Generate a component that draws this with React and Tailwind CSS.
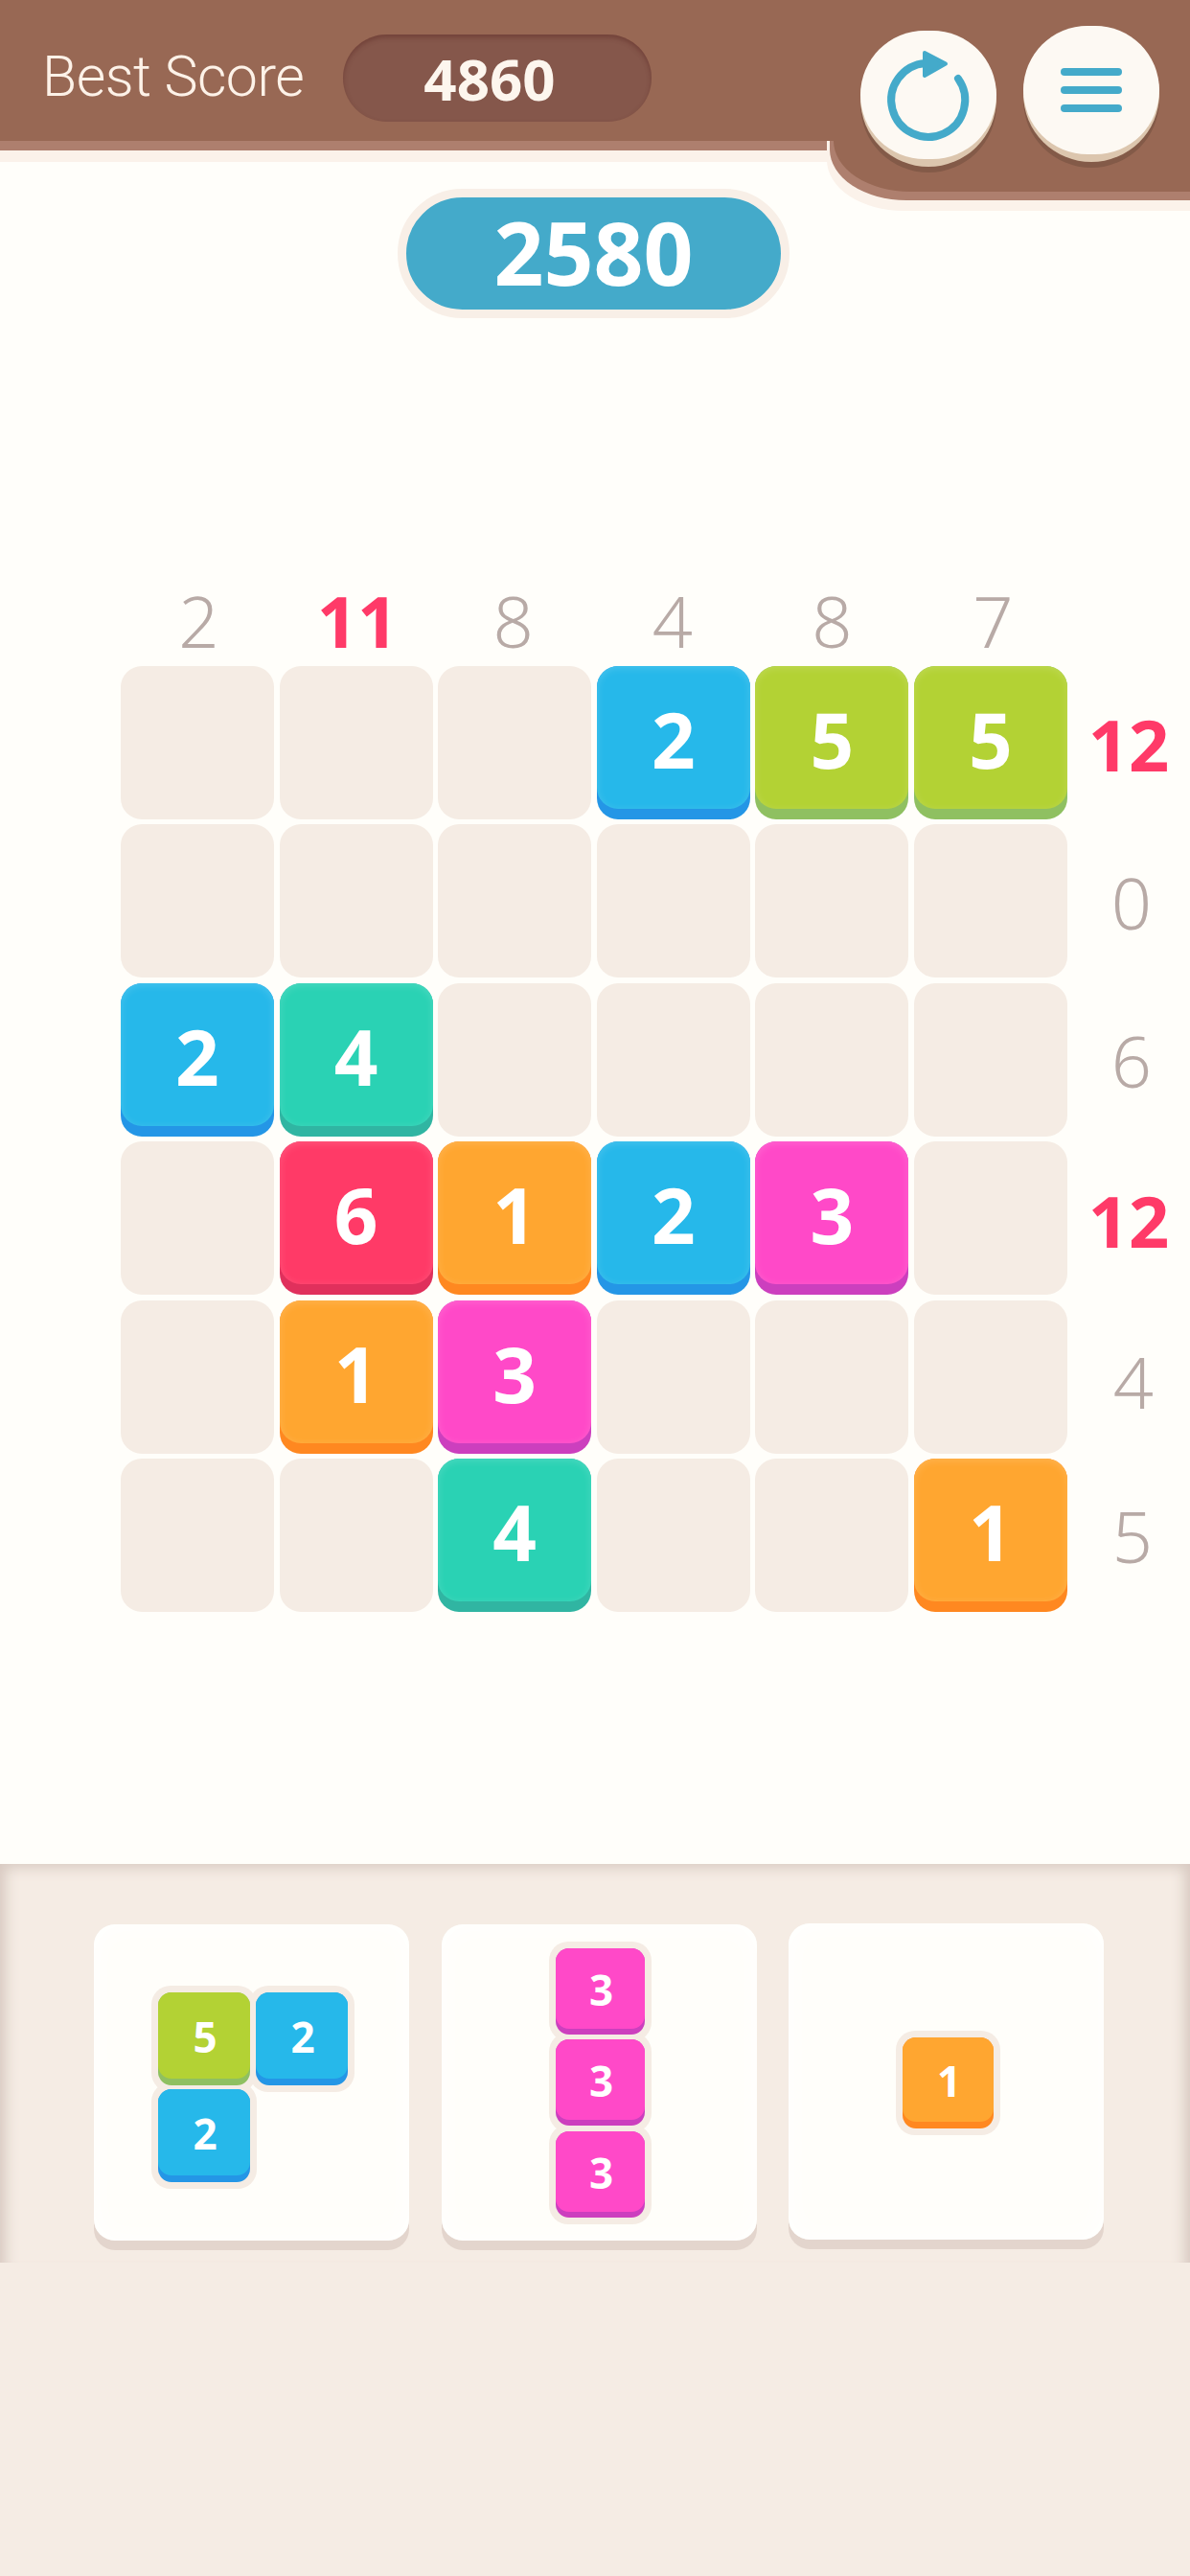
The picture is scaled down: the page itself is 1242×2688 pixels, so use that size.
const FONT = "font-['Noto_Sans','Open_Sans',sans-serif]";

const COLORS = {
  blue: { lip: "bg-[#2496e6]", face: "bg-[#26b8ea]" },
  green: { lip: "bg-[#8fc061]", face: "bg-[#b3d234]" },
  teal: { lip: "bg-[#30b5a2]", face: "bg-[#2ad2b4]" },
  red: { lip: "bg-[#e0305c]", face: "bg-[#ff3a67]" },
  orange: { lip: "bg-[#ff8820]", face: "bg-[#ffa630]" },
  pink: { lip: "bg-[#cc3fbe]", face: "bg-[#ff49c8]" },
};

const BOARD = [
  [null, null, null, [2, "blue"], [5, "green"], [5, "green"]],
  [null, null, null, null, null, null],
  [[2, "blue"], [4, "teal"], null, null, null, null],
  [null, [6, "red"], [1, "orange"], [2, "blue"], [3, "pink"], null],
  [null, [1, "orange"], [3, "pink"], null, null, null],
  [null, null, [4, "teal"], null, null, [1, "orange"]],
];
const TOP = [
  [2, false, "pl-[3px]"],
  [11, true, "pl-[3px]"],
  [8, false, "pr-[3px]"],
  [4, false, "pr-[2px]"],
  [8, false, ""],
  [7, false, "pl-[5px]"],
];
const SIDE = [
  [12, true, "pl-[4px] pt-[3px]"],
  [0, false, "pl-[10px] pt-[3px]"],
  [6, false, "pl-[10px] pt-[3px]"],
  [12, true, "pl-[4px] pt-[6px]"],
  [4, false, "pl-[14px] pt-[10px]"],
  [5, false, "pl-[12px] pt-[3px]"],
];

function Tile({ value, color }) {
  const c = COLORS[color];
  return (
    <div className={`w-[160px] h-[160px] rounded-[22px] ${c.lip}`}>
      <div className={`w-[160px] h-[149px] pt-[3px] rounded-[22px] ${c.face} shadow-[inset_0_2px_8px_rgba(255,255,255,0.16)] flex items-center justify-center text-white font-bold text-[80px] leading-none`}>
        {value}
      </div>
    </div>
  );
}

function MiniTile({ value, color, size, face }) {
  const c = COLORS[color];
  return (
    <div className={`relative ${size} rounded-[14px] ${c.lip} before:absolute before:-inset-[7px] before:-z-10 before:rounded-[20px] before:bg-[#f5ece4]`}>
      <div className={`${face} w-full pt-[2px] pl-[2px] rounded-[14px] ${c.face} flex items-center justify-center text-white font-bold text-[44px] leading-none`}>
        {value}
      </div>
    </div>
  );
}

function Label({ value, hot, className }) {
  return (
    <div className={`flex items-center justify-center text-[74px] leading-none ${hot ? "text-[#ff3a68] font-bold" : "text-[#b8aaa6] font-light"} ${className}`}>
      {value}
    </div>
  );
}

function RoundButton({ className, children }) {
  return (
    <div className={`relative w-[142px] h-[142px] rounded-full bg-[#dcc6ae] shadow-[0_6px_0_#835a48] ${className}`}>
      <div className="w-[142px] h-[134px] rounded-full bg-[#fdf9f3] flex items-center justify-center">
        {children}
      </div>
    </div>
  );
}

export default function App() {
  return (
    <div className={`w-[1242px] h-[2688px] bg-[#fffefa] flex flex-col overflow-hidden ${FONT}`}>
      {/* header */}
      <header className="relative shrink-0 h-[169px] border-b-[12px] border-[#fbf2ea]">
        <div className="h-[157px] bg-[#986854] border-b-[10px] border-[#ae7f6e] flex items-start pl-[44px]">
          <span className="w-[314px] mt-[38px] text-[59px] tracking-[-0.5px] leading-[84px] font-light font-['Roboto',sans-serif] text-[#fdf2e8]">Best Score</span>
          <div className="mt-[36px] w-[322px] h-[91px] pr-[16px] rounded-full bg-[#85574b] shadow-[inset_0_3px_5px_rgba(90,40,35,0.45)] flex items-center justify-center text-[60px] font-bold leading-none text-[#fdf6ee]">
            4860
          </div>
        </div>
        {/* notch: the tab hangs under the bar; clipped so its outline only shows below the bar */}
        <div className="absolute left-[840px] right-0 top-[147px] h-[90px] overflow-hidden">
          <div className="absolute left-[30px] -right-[20px] -top-[147px] h-[200px] bg-[#986854] rounded-bl-[80px_53px] shadow-[-4px_9px_0_#ae7f6e,-7px_20px_0_#fbf2ea]" />
        </div>
        <div className="absolute left-[898px] top-0 flex items-start">
          <RoundButton className="mt-[32px]">
            <svg width="142" height="142" viewBox="0 0 142 142" className="absolute left-0 top-0">
              <path d="M102 50A38.5 38.5 0 1 1 68 34" fill="none" stroke="#44aaca" strokeWidth="8" strokeLinecap="round" />
              <path d="M67 23L89 34.500L67 47Z" fill="#44aaca" stroke="#44aaca" strokeWidth="4" strokeLinejoin="round" />
            </svg>
          </RoundButton>
          <RoundButton className="mt-[27px] ml-[28px]">
            <div className="flex flex-col gap-[11px]">
              <div className="w-[64px] h-[8px] rounded-full bg-[#44aaca]" />
              <div className="w-[64px] h-[8px] rounded-full bg-[#44aaca]" />
              <div className="w-[64px] h-[8px] rounded-full bg-[#44aaca]" />
            </div>
          </RoundButton>
        </div>
      </header>

      {/* score */}
      <div className="shrink-0 ml-[415px] mt-[28px] w-[409px] h-[135px] pb-[3px] rounded-full border-[9px] border-[#f8efe7] bg-[#44aaca] flex items-center justify-center text-white font-bold text-[91px] leading-none">
        2580
      </div>

      {/* board */}
      <div className="shrink-0 mt-[284px] ml-[126px] w-[1116px]">
        <div className="grid grid-cols-[repeat(6,160px)] gap-x-[5.6px] h-[80px] pt-[3px] -mt-[1px]">
          {TOP.map(([v, hot, cls], i) => (
            <Label key={i} value={v} hot={hot} className={`h-[60px] ${cls}`} />
          ))}
        </div>
        <div className="flex">
          <div className="grid grid-cols-[repeat(6,160px)] gap-x-[5.6px] gap-y-[5.4px]">
            {BOARD.flat().map((cell, i) =>
              cell ? (
                <Tile key={i} value={cell[0]} color={cell[1]} />
              ) : (
                <div key={i} className="w-[160px] h-[160px] rounded-[22px] bg-[#f5ece4]" />
              )
            )}
          </div>
          <div className="grid grid-rows-[repeat(6,160px)] gap-y-[5.4px] ml-[7px] w-[110px]">
            {SIDE.map(([v, hot, cls], i) => (
              <Label key={i} value={v} hot={hot} className={cls} />
            ))}
          </div>
        </div>
      </div>

      {/* tray */}
      <div className="shrink-0 mt-[263px] h-[416px] bg-[#f5ece4] shadow-[inset_0_16px_14px_-12px_#d8cac2,inset_18px_0_14px_-12px_#d8cac2,inset_-18px_0_14px_-12px_#d8cac2] flex items-start gap-[33.500px] pl-[98px] pt-[63px]">
        <div className="isolate w-[329px] h-[330px] rounded-[22px] bg-[#fffefa] shadow-[0_10px_0_#e3d5cd,inset_0_0_30px_#ffffff] pl-[67px] pt-[71px]">
          <div className="grid grid-cols-[96px_96px] gap-x-[6px] gap-y-[4px]">
            <MiniTile value={5} color="green" size="w-[96px] h-[97px]" face="h-[90px]" />
            <MiniTile value={2} color="blue" size="w-[96px] h-[97px]" face="h-[90px]" />
            <MiniTile value={2} color="blue" size="w-[96px] h-[97px]" face="h-[90px]" />
          </div>
        </div>
        <div className="isolate w-[329px] h-[330px] rounded-[22px] bg-[#fffefa] shadow-[0_10px_0_#e3d5cd,inset_0_0_30px_#ffffff] pl-[119.500px] pt-[25px]">
          <div className="flex flex-col gap-[5.500px]">
            <MiniTile value={3} color="pink" size="w-[93px] h-[90px]" face="h-[84px]" />
            <MiniTile value={3} color="pink" size="w-[93px] h-[90px]" face="h-[84px]" />
            <MiniTile value={3} color="pink" size="w-[93px] h-[90px]" face="h-[84px]" />
          </div>
        </div>
        <div className="isolate -mt-[1px] w-[329px] h-[330px] rounded-[22px] bg-[#fffefa] shadow-[0_10px_0_#e3d5cd,inset_0_0_30px_#ffffff] pl-[119px] pt-[119px]">
          <MiniTile value={1} color="orange" size="w-[95px] h-[95px]" face="h-[88px]" />
        </div>
      </div>

      <div className="flex-1 bg-[#f5ece4]" />
    </div>
  );
}
